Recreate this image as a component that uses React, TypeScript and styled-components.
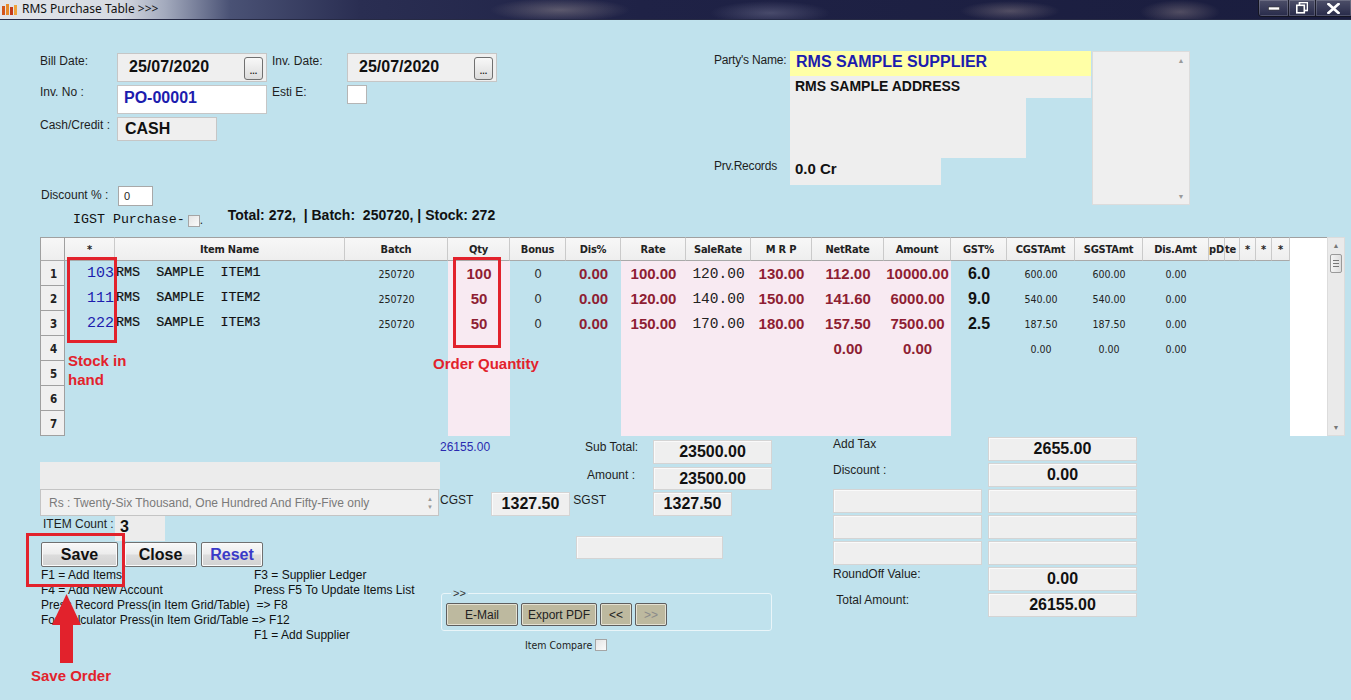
import React from "react";
import styled, { createGlobalStyle } from "styled-components";

const BG = "#c0e2ed";
const PINK = "#f8eaf2";
const RED = "#8e1e33";
const ANN = "#e2222c";
const BLUE = "#1c1cae";

const GlobalStyle = createGlobalStyle`
  html, body { margin: 0; padding: 0; background: ${BG}; }
  body { font-family: "Liberation Sans", Arial, sans-serif; font-size: 12px; color: #1e1e1e; }
  * { box-sizing: border-box; }
`;

const Page = styled.div`
  position: relative;
  width: 1351px;
  height: 700px;
  overflow: hidden;
  background: ${BG};
`;

/* ---------- title bar ---------- */
const TitleBar = styled.div`
  height: 20px;
  display: flex;
  align-items: flex-start;
  border-bottom: 1px solid #262a44;
  background:
    radial-gradient(ellipse 70px 12px at 560px 10px, rgba(200, 185, 175, 0.35), transparent),
    radial-gradient(ellipse 60px 12px at 770px 13px, rgba(170, 170, 195, 0.3), transparent),
    radial-gradient(ellipse 50px 10px at 1010px 11px, rgba(205, 185, 175, 0.3), transparent),
    radial-gradient(ellipse 40px 12px at 1180px 12px, rgba(205, 185, 175, 0.3), transparent),
    linear-gradient(90deg, #e2e5ea 0px, #d6dae2 120px, #a3aabd 165px, #4a5275 230px, #2a2e52 360px, #1f2246 640px, #1a1d3e 1351px);
`;

const TitleIcon = styled.svg`
  width: 18px;
  height: 14px;
  margin: 3px 3px 0 1px;
  flex: none;
`;

const TitleText = styled.span`
  font-family: "Noto Sans", "Liberation Sans", sans-serif;
  font-size: 12px;
  line-height: 18px;
  color: #111;
`;

const WinButtons = styled.div`
  margin-left: auto;
  display: flex;
  height: 17px;
  border: 1px solid rgba(20, 20, 30, 0.85);
  border-top: none;
  border-right: none;
  border-radius: 0 0 0 4px;
  overflow: hidden;
`;

const WinButton = styled.div<{ $w: number }>`
  width: ${(p) => p.$w}px;
  height: 100%;
  display: flex;
  align-items: center;
  justify-content: center;
  background: linear-gradient(rgba(255, 255, 255, 0.22), rgba(255, 255, 255, 0.06));
  box-shadow: inset 0 0 0 1px rgba(255, 255, 255, 0.18);
  border-left: 1px solid rgba(20, 20, 30, 0.8);
  &:first-child { border-left: none; }
`;

/* ---------- generic form bits ---------- */
const Content = styled.div`
  padding-left: 40px;
`;

const TopSection = styled.div`
  display: flex;
  align-items: flex-start;
  padding-top: 31px;
  height: 217px;
`;

const LeftForm = styled.div`
  margin-top: 2px;
  width: 470px;
  display: flex;
  flex-direction: column;
`;

const FormRow = styled.div<{ $h: number; $mt?: number }>`
  display: flex;
  align-items: flex-start;
  height: ${(p) => p.$h}px;
  margin-top: ${(p) => p.$mt ?? 0}px;
`;

const FieldLabel = styled.span<{ $w: number; $pt?: number; $ml?: number }>`
  width: ${(p) => p.$w}px;
  padding-top: ${(p) => p.$pt ?? 0}px;
  margin-left: ${(p) => p.$ml ?? 0}px;
  font-size: 12px;
  line-height: 14px;
  color: #1e1e1e;
  white-space: nowrap;
  flex: none;
`;

const DateBox = styled.div`
  width: 150px;
  height: 29px;
  background: #efefef;
  border: 1px solid #c6c6c6;
  display: flex;
  align-items: center;
  justify-content: space-between;
  padding: 0 3px 1px 11px;
  font-weight: bold;
  font-size: 16px;
  color: #111;
`;

const DotsButton = styled.span`
  width: 19px;
  height: 23px;
  margin-top: 2px;
  border: 1px solid #707070;
  border-radius: 3px;
  background: linear-gradient(#f8f8f8, #dcdcdc);
  display: flex;
  align-items: flex-end;
  justify-content: center;
  padding-bottom: 5px;
  font-size: 9px;
  line-height: 6px;
  font-weight: bold;
  color: #222;
`;

const InvBox = styled.div`
  width: 150px;
  height: 29px;
  background: #fff;
  border: 1px solid #c6c6c6;
  display: flex;
  align-items: center;
  padding: 0 0 3px 6px;
  font-weight: bold;
  font-size: 16px;
  color: ${BLUE};
`;

const CashBox = styled.div`
  width: 100px;
  height: 24px;
  background: #efefef;
  border: 1px solid #c6c6c6;
  display: flex;
  align-items: center;
  padding-left: 7px;
  font-weight: bold;
  font-size: 16px;
  color: #111;
`;

const CheckBox = styled.span<{ $w: number; $h: number; $ml?: number; $mt?: number }>`
  display: inline-block;
  width: ${(p) => p.$w}px;
  height: ${(p) => p.$h}px;
  margin-left: ${(p) => p.$ml ?? 0}px;
  margin-top: ${(p) => p.$mt ?? 0}px;
  background: linear-gradient(135deg, #e4e4e4, #fbfbfb);
  border: 1px solid #a5a5a5;
  flex: none;
`;

const WhiteCheck = styled.span`
  width: 20px;
  height: 19px;
  background: #fff;
  border: 1px solid #b5b5b5;
`;

const SmallInput = styled.div`
  width: 35px;
  height: 20px;
  background: #fff;
  border: 1px solid #a8a8a8;
  font-size: 11px;
  line-height: 18px;
  padding-left: 5px;
`;

const MonoLabel = styled.span`
  font-family: "Liberation Mono", "Courier New", monospace;
  font-size: 13.3px;
  line-height: 14px;
  margin-top: 6px;
  padding-left: 33px;
  color: #111;
  white-space: pre;
`;

const TotalsText = styled.span`
  margin-left: 24px;
  font-weight: bold;
  font-size: 14px;
  line-height: 16px;
  white-space: pre;
  color: #111;
`;

/* ---------- party section ---------- */
const PartyWrap = styled.div`
  margin-left: 204px;
  display: flex;
  align-items: flex-start;
`;

const PartyLabels = styled.div`
  width: 76px;
  display: flex;
  flex-direction: column;
`;

const PartyLabel = styled.span<{ $mt: number }>`
  margin-top: ${(p) => p.$mt}px;
  font-size: 12px;
  line-height: 14px;
  white-space: nowrap;
  letter-spacing: -0.2px;
`;

const PartyFields = styled.div`
  width: 301px;
  display: flex;
  flex-direction: column;
`;

const NameBox = styled.div`
  height: 25px;
  background: #ffffa6;
  display: flex;
  align-items: center;
  padding: 0 0 3px 6px;
  font-weight: bold;
  font-size: 16px;
  color: ${BLUE};
`;

const AddressBox = styled.div`
  height: 22px;
  background: #eeeeee;
  padding: 2px 0 0 5px;
  font-weight: bold;
  font-size: 14px;
  line-height: 16px;
  color: #111;
`;

const GrayBlock = styled.div<{ $w: number; $h: number }>`
  width: ${(p) => p.$w}px;
  height: ${(p) => p.$h}px;
  background: #eeeeee;
`;

const PrvBox = styled.div`
  width: 151px;
  height: 27px;
  background: #eeeeee;
  padding: 2px 0 0 5px;
  font-weight: bold;
  font-size: 15px;
  line-height: 18px;
  color: #111;
`;

const ListBox = styled.div`
  margin-left: 1px;
  width: 98px;
  height: 154px;
  background: #efefef;
  border: 1px solid #dcdcdc;
  display: flex;
  justify-content: flex-end;
`;

const ListScroll = styled.div`
  width: 16px;
  display: flex;
  flex-direction: column;
  justify-content: space-between;
  align-items: center;
  padding: 5px 0 4px;
  font-size: 7px;
  color: #9a9a9a;
`;

/* ---------- grid ---------- */
const COLS = [25, 50, 230, 103, 62, 56, 55, 65, 65, 61, 72, 67, 56, 68, 68, 66, 16, 15, 16, 16, 18];
const HEADERS = ["", "*", "Item Name", "Batch", "Qty", "Bonus", "Dis%", "Rate", "SaleRate", "M R P", "NetRate", "Amount", "GST%", "CGSTAmt", "SGSTAmt", "Dis.Amt", "pD", "te", "*", "*", "*"];
const PINK_COLS = new Set([4, 7, 8, 9, 10, 11]);

type Kind = "stock" | "name" | "small" | "red" | "plain" | "mono" | "gst" | "none";
const KINDS: Kind[] = ["none", "stock", "name", "small", "red", "plain", "red", "red", "mono", "red", "red", "red", "gst", "small", "small", "small", "none", "none", "none", "none", "none"];

const ROWS: string[][] = [
  ["103", "RMS  SAMPLE  ITEM1", "250720", "100", "0", "0.00", "100.00", "120.00", "130.00", "112.00", "10000.00", "6.0", "600.00", "600.00", "0.00"],
  ["111", "RMS  SAMPLE  ITEM2", "250720", "50", "0", "0.00", "120.00", "140.00", "150.00", "141.60", "6000.00", "9.0", "540.00", "540.00", "0.00"],
  ["222", "RMS  SAMPLE  ITEM3", "250720", "50", "0", "0.00", "150.00", "170.00", "180.00", "157.50", "7500.00", "2.5", "187.50", "187.50", "0.00"],
  ["", "", "", "", "", "", "", "", "", "0.00", "0.00", "", "0.00", "0.00", "0.00"],
  [],
  [],
  [],
];

const GridWrap = styled.div`
  width: 1305px;
  height: 199px;
  display: flex;
`;

const GridTable = styled.div`
  display: grid;
  grid-template-columns: ${COLS.map((c) => `${c}px`).join(" ")};
  grid-template-rows: 24px repeat(7, 25px);
  background: ${BG};
`;

const HeadCell = styled.div<{ $align?: string }>`
  display: flex;
  align-items: center;
  justify-content: ${(p) => p.$align ?? "center"};
  overflow: hidden;
  white-space: nowrap;
  background: linear-gradient(#f7f7f7, #eeeeee);
  border-top: 1px solid #a0a0a0;
  border-bottom: 1px solid #a9a9a9;
  border-right: 1px solid #cacaca;
  font-family: "DejaVu Sans Condensed", "DejaVu Sans", sans-serif;
  font-weight: bold;
  font-size: 11px;
  letter-spacing: -0.2px;
  color: #222;
  &:first-child { border-left: 1px solid #a0a0a0; border-right-color: #a0a0a0; }
`;

const RowHead = styled.div`
  display: flex;
  align-items: center;
  padding: 1px 0 0 9px;
  background: #f0f0f0;
  border-left: 1px solid #a0a0a0;
  border-right: 1px solid #a0a0a0;
  border-bottom: 1px solid #a0a0a0;
  font-family: "DejaVu Sans Condensed", "DejaVu Sans", sans-serif;
  font-weight: bold;
  font-size: 11.5px;
  color: #222;
`;

const DataCell = styled.div<{ $pink: boolean; $kind: Kind }>`
  display: flex;
  align-items: center;
  overflow: visible;
  white-space: pre;
  background: ${(p) => (p.$pink ? PINK : "transparent")};
  justify-content: ${(p) => (p.$kind === "stock" ? "flex-end" : p.$kind === "name" ? "flex-start" : "center")};
  padding-right: ${(p) => (p.$kind === "stock" ? "1px" : "0")};
  padding-left: ${(p) => (p.$kind === "name" ? "1px" : "0")};
  padding-bottom: ${(p) => (p.$kind === "name" ? "3px" : p.$kind === "stock" ? "1px" : "0")};
  ${(p) => {
    switch (p.$kind) {
      case "stock":
        return `font-family: "Liberation Mono", "Courier New", monospace; font-size: 15px; color: ${BLUE};`;
      case "name":
        return `font-family: "Liberation Mono", "Courier New", monospace; font-size: 13.4px; color: #111; -webkit-text-stroke: 0.2px #111;`;
      case "small":
        return `font-family: "DejaVu Sans Condensed", "Liberation Sans", sans-serif; font-size: 10.5px; color: #222;`;
      case "red":
        return `font-weight: bold; font-size: 15px; color: ${RED};`;
      case "plain":
        return `font-family: "DejaVu Sans", sans-serif; font-size: 12px; color: #333;`;
      case "mono":
        return `font-family: "Liberation Mono", "Courier New", monospace; font-size: 14.5px; color: #222;`;
      case "gst":
        return `font-weight: bold; font-size: 16px; color: #111;`;
      default:
        return ``;
    }
  }}
`;

const GridFiller = styled.div`
  width: 37px;
  background: #fff;
  border-top: 1px solid #a0a0a0;
`;

const ScrollBar = styled.div`
  width: 18px;
  background: #eaeaea;
  border: 1px solid #dcdcdc;
  display: flex;
  flex-direction: column;
  align-items: center;
  font-size: 7px;
  color: #777;
`;

const ScrollArrow = styled.span<{ $bottom?: boolean }>`
  margin-top: ${(p) => (p.$bottom ? "auto" : "4px")};
  margin-bottom: ${(p) => (p.$bottom ? "3px" : "0")};
  line-height: 8px;
`;

const ScrollThumb = styled.div`
  margin-top: 4px;
  width: 12px;
  height: 19px;
  border: 1px solid #9a9a9a;
  border-radius: 2px;
  background: linear-gradient(90deg, #f4f4f4, #dedede);
  display: flex;
  flex-direction: column;
  align-items: center;
  justify-content: center;
  gap: 2px;
  & > i { display: block; width: 6px; height: 1px; background: #777; }
`;

/* ---------- bottom ---------- */
const BottomSection = styled.div`
  display: flex;
  align-items: flex-start;
`;

const ColA = styled.div`
  width: 400px;
  display: flex;
  flex-direction: column;
`;

const GrayBar = styled.div`
  margin-top: 26px;
  width: 400px;
  height: 27px;
  background: #ececec;
`;

const WordsBox = styled.div`
  width: 399px;
  height: 27px;
  background: #f0f0f0;
  border: 1px solid #c4c4c4;
  display: flex;
  align-items: center;
  padding-left: 8px;
  font-size: 12px;
  color: #7a7a7a;
`;

const WordsScroll = styled.span`
  margin-left: auto;
  width: 12px;
  display: flex;
  flex-direction: column;
  align-items: center;
  font-size: 6px;
  line-height: 8px;
  color: #999;
  margin-right: 2px;
`;

const CountRow = styled.div`
  height: 26px;
  display: flex;
  align-items: flex-start;
`;

const CountValue = styled.div`
  width: 50px;
  height: 25px;
  background: #ececec;
  padding: 3px 0 0 5px;
  font-weight: bold;
  font-size: 16px;
  line-height: 16px;
  color: #111;
`;

const ButtonRow = styled.div`
  height: 25px;
  display: flex;
  padding-left: 1px;
`;

const MainButton = styled.button<{ $w: number; $ml: number; $blue?: boolean }>`
  width: ${(p) => p.$w}px;
  margin-left: ${(p) => p.$ml}px;
  height: 25px;
  padding: 0;
  border: 1px solid #707070;
  border-radius: 2px;
  background: linear-gradient(#f8f8f8 0%, #ececec 48%, #dcdcdc 52%, #d2d2d2 100%);
  box-shadow: inset 0 0 0 1px #fbfbfb;
  font-family: "Liberation Sans", Arial, sans-serif;
  font-weight: bold;
  font-size: 16px;
  color: ${(p) => (p.$blue ? "#3a3ac8" : "#111")};
`;

const HelpGrid = styled.div`
  margin-top: 1px;
  margin-left: 1px;
  display: grid;
  grid-template-columns: 213px 200px;
  grid-auto-rows: 15px;
  font-size: 12px;
  line-height: 15px;
  color: #111;
  white-space: pre;
`;

const ColB = styled.div`
  width: 332px;
  display: flex;
  flex-direction: column;
`;

const BRow = styled.div<{ $mt: number }>`
  display: flex;
  align-items: flex-start;
  margin-top: ${(p) => p.$mt}px;
`;

const BLabel = styled.span<{ $w: number; $blue?: boolean; $pt?: number }>`
  width: ${(p) => p.$w}px;
  padding-top: ${(p) => p.$pt ?? 0}px;
  font-size: 12px;
  line-height: 14px;
  color: ${(p) => (p.$blue ? "#2a2ab0" : "#1e1e1e")};
  white-space: nowrap;
  flex: none;
`;

const ValueBox = styled.div<{ $w: number; $h?: number; $ml?: number }>`
  width: ${(p) => p.$w}px;
  height: ${(p) => p.$h ?? 24}px;
  margin-left: ${(p) => p.$ml ?? 0}px;
  background: #efefef;
  border: 1px solid #d4d4d4;
  box-shadow: inset 1px 1px 0 #fafafa;
  display: flex;
  align-items: center;
  justify-content: center;
  font-weight: bold;
  font-size: 16px;
  color: #111;
  flex: none;
`;

const ActionGroup = styled.fieldset`
  margin: 28px 0 0 1px;
  width: 331px;
  padding: 4px 4px 4px 4px;
  border: 1px solid #e9f5f9;
  border-radius: 3px;
  display: flex;
  gap: 3px;
`;

const ActionLegend = styled.legend`
  padding: 0 2px;
  margin-left: 5px;
  font-size: 11px;
  line-height: 12px;
  color: #333;
`;

const ActionButton = styled.button<{ $w: number; $disabled?: boolean }>`
  width: ${(p) => p.$w}px;
  height: 23px;
  padding: 0;
  margin: 0;
  background: #bdb99f;
  border: 1px solid #5e5e5e;
  border-radius: 2px;
  box-shadow: inset 0 0 0 1px #e4e1d2;
  font-family: "Liberation Sans", Arial, sans-serif;
  font-size: 12px;
  color: ${(p) => (p.$disabled ? "#8a8a8a" : "#222")};
`;

const CompareRow = styled.div`
  margin: 8px 0 0 85px;
  display: flex;
  align-items: center;
  gap: 3px;
  font-family: "DejaVu Sans Condensed", "DejaVu Sans", sans-serif;
  font-size: 10.5px;
  color: #222;
`;

const ColC = styled.div`
  margin-left: 61px;
  margin-top: 1px;
  display: grid;
  grid-template-columns: 155px 149px;
  grid-auto-rows: 24px;
  row-gap: 2px;
`;

const CLabel = styled.span`
  font-size: 12px;
  line-height: 14px;
  white-space: nowrap;
  color: #1e1e1e;
`;

/* ---------- annotations (overlays) ---------- */
const AnnBox = styled.div<{ $l: number; $t: number; $w: number; $h: number }>`
  position: absolute;
  left: ${(p) => p.$l}px;
  top: ${(p) => p.$t}px;
  width: ${(p) => p.$w}px;
  height: ${(p) => p.$h}px;
  border: 3px solid ${ANN};
  pointer-events: none;
`;

const AnnText = styled.div<{ $l: number; $t: number }>`
  position: absolute;
  left: ${(p) => p.$l}px;
  top: ${(p) => p.$t}px;
  font-weight: bold;
  font-size: 15px;
  line-height: 19px;
  color: ${ANN};
  white-space: pre;
`;

const AnnArrow = styled.svg`
  position: absolute;
  left: 52px;
  top: 594px;
  width: 29px;
  height: 69px;
`;

export default function App() {
  return (
    <Page>
      <GlobalStyle />
      <TitleBar>
        <TitleIcon viewBox="0 0 18 14">
          <rect x="1" y="3" width="3" height="9" fill="#d2561c" />
          <rect x="5" y="1" width="3" height="11" fill="#e8892a" />
          <rect x="9" y="4" width="3" height="8" fill="#c43b1a" />
          <rect x="13" y="2" width="3" height="10" fill="#f0a23a" />
        </TitleIcon>
        <TitleText>RMS Purchase Table &gt;&gt;&gt;</TitleText>
        <WinButtons>
          <WinButton $w={29}>
            <svg width="12" height="6" viewBox="0 0 12 6">
              <rect x="0.5" y="2" width="11" height="3" fill="#fff" stroke="#333" strokeWidth="0.6" />
            </svg>
          </WinButton>
          <WinButton $w={27}>
            <svg width="12" height="12" viewBox="0 0 12 12">
              <rect x="3.5" y="0.5" width="8" height="8" fill="none" stroke="#fff" strokeWidth="1.6" />
              <rect x="0.8" y="3.3" width="7.5" height="7.5" fill="#3a3e55" stroke="#fff" strokeWidth="1.6" />
              <rect x="3" y="6" width="3" height="2.5" fill="#3a3e55" />
            </svg>
          </WinButton>
          <WinButton $w={36}>
            <svg width="13" height="11" viewBox="0 0 13 11">
              <path d="M1.5 1 L11.5 10 M11.5 1 L1.5 10" stroke="#fff" strokeWidth="2.6" strokeLinecap="square" />
            </svg>
          </WinButton>
        </WinButtons>
      </TitleBar>

      <Content>
        <TopSection>
          <LeftForm>
            <FormRow $h={29}>
              <FieldLabel $w={77} $pt={1}>Bill Date:</FieldLabel>
              <DateBox>
                <span>25/07/2020</span>
                <DotsButton>...</DotsButton>
              </DateBox>
              <FieldLabel $w={75} $ml={5} $pt={1}>Inv. Date:</FieldLabel>
              <DateBox>
                <span>25/07/2020</span>
                <DotsButton>...</DotsButton>
              </DateBox>
            </FormRow>
            <FormRow $h={29} $mt={3}>
              <FieldLabel $w={77}>Inv. No :</FieldLabel>
              <InvBox>PO-00001</InvBox>
              <FieldLabel $w={75} $ml={5}>Esti E:</FieldLabel>
              <WhiteCheck />
            </FormRow>
            <FormRow $h={24} $mt={3}>
              <FieldLabel $w={77} $pt={1}>Cash/Credit :</FieldLabel>
              <CashBox>CASH</CashBox>
            </FormRow>
            <FormRow $h={20} $mt={45}>
              <FieldLabel $w={77} $pt={2} $ml={1}>Discount % :</FieldLabel>
              <SmallInput>0</SmallInput>
            </FormRow>
            <FormRow $h={20} $mt={1}>
              <MonoLabel>IGST Purchase-</MonoLabel>
              <CheckBox $w={12} $h={12} $ml={3} $mt={8} />
              <FieldLabel $w={4} $pt={6}>.</FieldLabel>
              <TotalsText>Total: 272,  | Batch:  250720, | Stock: 272</TotalsText>
            </FormRow>
          </LeftForm>

          <PartyWrap>
            <PartyLabels>
              <PartyLabel $mt={2}>Party's Name:</PartyLabel>
              <PartyLabel $mt={92}>Prv.Records</PartyLabel>
            </PartyLabels>
            <PartyFields>
              <NameBox>RMS SAMPLE SUPPLIER</NameBox>
              <AddressBox>RMS SAMPLE ADDRESS</AddressBox>
              <GrayBlock $w={236} $h={60} />
              <PrvBox>0.0 Cr</PrvBox>
            </PartyFields>
            <ListBox>
              <ListScroll>
                <span>▲</span>
                <span>▼</span>
              </ListScroll>
            </ListBox>
          </PartyWrap>
        </TopSection>

        <GridWrap>
          <GridTable>
            {HEADERS.map((h, i) => (
              <HeadCell key={`h${i}`} $align={i === 16 ? "flex-end" : i === 17 ? "flex-start" : "center"}>
                {h}
              </HeadCell>
            ))}
            {ROWS.map((row, r) => (
              <React.Fragment key={`r${r}`}>
                <RowHead>{r + 1}</RowHead>
                {COLS.slice(1).map((_, ci) => {
                  const c = ci + 1;
                  const val = row[ci] ?? "";
                  return (
                    <DataCell key={`c${r}-${c}`} $pink={PINK_COLS.has(c)} $kind={KINDS[c]}>
                      {val}
                    </DataCell>
                  );
                })}
              </React.Fragment>
            ))}
          </GridTable>
          <GridFiller />
          <ScrollBar>
            <ScrollArrow>▲</ScrollArrow>
            <ScrollThumb>
              <i />
              <i />
              <i />
            </ScrollThumb>
            <ScrollArrow $bottom>▼</ScrollArrow>
          </ScrollBar>
        </GridWrap>

        <BottomSection>
          <ColA>
            <GrayBar />
            <WordsBox>
              Rs : Twenty-Six Thousand, One Hundred And Fifty-Five only
              <WordsScroll>
                <span>▲</span>
                <span>▼</span>
              </WordsScroll>
            </WordsBox>
            <CountRow>
              <FieldLabel $w={72} $pt={1} $ml={3}>ITEM Count :</FieldLabel>
              <CountValue>3</CountValue>
            </CountRow>
            <ButtonRow>
              <MainButton $w={77} $ml={0}>Save</MainButton>
              <MainButton $w={73} $ml={6}>Close</MainButton>
              <MainButton $w={62} $ml={4} $blue>Reset</MainButton>
            </ButtonRow>
            <HelpGrid>
              <span>F1 = Add Items</span>
              <span>F3 = Supplier Ledger</span>
              <span>F4 = Add New Account</span>
              <span>Press F5 To Update Items List</span>
              <span>Press Record Press(in Item Grid/Table)  =&gt; F8</span>
              <span />
              <span>For Calculator Press(in Item Grid/Table =&gt; F12</span>
              <span />
              <span />
              <span>F1 = Add Supplier</span>
            </HelpGrid>
          </ColA>

          <ColB>
            <BRow $mt={4}>
              <BLabel $w={145} $blue>26155.00</BLabel>
              <BLabel $w={68}>Sub Total:</BLabel>
              <ValueBox $w={119}>23500.00</ValueBox>
            </BRow>
            <BRow $mt={3}>
              <BLabel $w={147} />
              <BLabel $w={66} $pt={1}>Amount :</BLabel>
              <ValueBox $w={119} $h={23}>23500.00</ValueBox>
            </BRow>
            <BRow $mt={2}>
              <BLabel $w={51} $pt={1}>CGST</BLabel>
              <ValueBox $w={79}>1327.50</ValueBox>
              <BLabel $w={83} $pt={1}>&nbsp;SGST</BLabel>
              <ValueBox $w={79}>1327.50</ValueBox>
            </BRow>
            <BRow $mt={20}>
              <ValueBox $w={147} $h={23} $ml={136} />
            </BRow>
            <ActionGroup>
              <ActionLegend>&gt;&gt;</ActionLegend>
              <ActionButton $w={72}>E-Mail</ActionButton>
              <ActionButton $w={76}>Export PDF</ActionButton>
              <ActionButton $w={32}>&lt;&lt;</ActionButton>
              <ActionButton $w={32} $disabled>&gt;&gt;</ActionButton>
            </ActionGroup>
            <CompareRow>
              Item Compare
              <CheckBox $w={12} $h={12} />
            </CompareRow>
          </ColB>

          <ColC>
            <CLabel>Add Tax</CLabel>
            <ValueBox $w={149}>2655.00</ValueBox>
            <CLabel>Discount :</CLabel>
            <ValueBox $w={149}>0.00</ValueBox>
            <ValueBox $w={149} />
            <ValueBox $w={149} />
            <ValueBox $w={149} />
            <ValueBox $w={149} />
            <ValueBox $w={149} />
            <ValueBox $w={149} />
            <CLabel>RoundOff Value:</CLabel>
            <ValueBox $w={149}>0.00</ValueBox>
            <CLabel>&nbsp;Total Amount:</CLabel>
            <ValueBox $w={149}>26155.00</ValueBox>
          </ColC>
        </BottomSection>
      </Content>

      <AnnBox $l={67} $t={257} $w={50} $h={86} />
      <AnnText $l={68} $t={351}>{"Stock in\nhand"}</AnnText>
      <AnnBox $l={453} $t={257} $w={48} $h={91} />
      <AnnText $l={433} $t={354}>Order Quantity</AnnText>
      <AnnBox $l={26} $t={533} $w={99} $h={54} />
      <AnnArrow viewBox="0 0 29 69">
        <polygon points="14.5,0 0,31 29,31" fill={ANN} />
        <rect x="8" y="29" width="13" height="40" fill={ANN} />
      </AnnArrow>
      <AnnText $l={31} $t={666}>Save Order</AnnText>
    </Page>
  );
}
